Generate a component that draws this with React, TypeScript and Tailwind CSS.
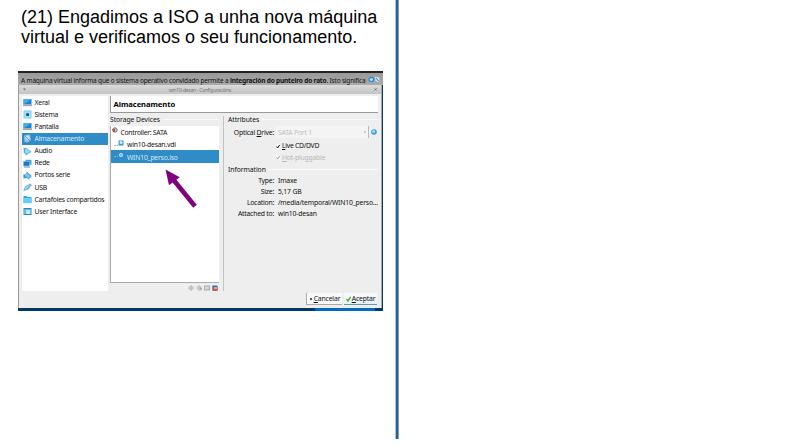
import React from 'react';

type IconName = 'screen' | 'chip' | 'disk' | 'audio' | 'net' | 'serial' | 'usb' | 'folder' | 'ui';

function SideIcon({ name }: { name: IconName }) {
  return (
    <svg className="h-[9px] w-[9px] shrink-0" viewBox="0 0 9 9">
      {name === 'screen' && (
        <>
          <rect x="0.5" y="1" width="8" height="5.5" fill="#1583d8" />
          <path d="M0.5 6.5V1h8z" fill="#48a9ec" />
          <rect x="0" y="6.3" width="9" height="1.9" fill="#9eabb3" />
        </>
      )}
      {name === 'chip' && (
        <>
          <rect x="0.5" y="0.5" width="8" height="8" fill="#79cdf2" />
          <rect x="1.5" y="1.5" width="6" height="6" fill="#a5e2fa" />
          <rect x="3.2" y="3.2" width="2.8" height="2.8" fill="#14507f" />
        </>
      )}
      {name === 'disk' && (
        <>
          <path d="M1 1.5 7 0.5 8 6 5 8.5 1.5 8z" fill="#8dc3e8" />
          <circle cx="4.5" cy="3.8" r="2.2" fill="#c9e3f4" />
          <path d="M2 2 7 7" stroke="#5692c0" strokeWidth="0.8" />
        </>
      )}
      {name === 'audio' && (
        <>
          <path d="M0.6 0.6 4 1.5 8.6 4.7 4.4 7.6 2.8 8.6 2.6 6.8 0.8 6z" fill="#4fa9e0" />
          <path d="M2 2 4 2.2 7.6 4.7 4.2 6.8 2 5.4z" fill="#9bd8f8" />
        </>
      )}
      {name === 'net' && (
        <>
          <rect x="2.5" y="0.8" width="6" height="5" fill="#4aa6dd" />
          <rect x="0.5" y="2.4" width="5.8" height="4.6" fill="#147ad0" stroke="#8ac3e4" strokeWidth="0.6" />
          <rect x="1" y="7.4" width="6" height="1.2" fill="#8f9da5" />
        </>
      )}
      {name === 'serial' && (
        <>
          <path d="M0.3 3.6 3.2 3.2 3.6 0.6 8.8 5 5.6 8.6 4 7 0.5 7.6z" fill="#3f9cda" />
          <path d="M2 4.6 4.2 2.6 7.4 5.1 5.3 7.2z" fill="#7ccaf5" />
        </>
      )}
      {name === 'usb' && (
        <>
          <path d="M0.5 7 2 3.4 5.5 1.2 7.8 3.5 5.6 6.6 2 7.4 0.6 8.6z" fill="#6fbbe6" />
          <path d="M5.5 1.2 6.8 0.3 9 2.3 7.8 3.5z" fill="#9ca9b0" />
          <path d="M2.4 6 5.5 2.7" stroke="#d1f1ff" strokeWidth="1" />
        </>
      )}
      {name === 'folder' && (
        <>
          <path d="M0.5 1h3l1 1h4v6h-8z" fill="#2fa9e5" />
          <rect x="0.5" y="3" width="8" height="5.2" fill="#65cef8" />
        </>
      )}
      {name === 'ui' && (
        <>
          <rect x="0.5" y="1" width="8" height="7" fill="#1c89d1" />
          <rect x="1.5" y="2.5" width="6" height="4.5" fill="#c4ebff" />
          <rect x="1.5" y="2.5" width="1.6" height="4.5" fill="#63baf0" />
        </>
      )}
    </svg>
  );
}

const sections: { label: string; icon: IconName }[] = [
  { label: 'Xeral', icon: 'screen' },
  { label: 'Sistema', icon: 'chip' },
  { label: 'Pantalla', icon: 'screen' },
  { label: 'Almacenamento', icon: 'disk' },
  { label: 'Audio', icon: 'audio' },
  { label: 'Rede', icon: 'net' },
  { label: 'Portos serie', icon: 'serial' },
  { label: 'USB', icon: 'usb' },
  { label: 'Cartafoles compartidos', icon: 'folder' },
  { label: 'User Interface', icon: 'ui' },
];

const info = [
  ['Type:', 'Imaxe'],
  ['Size:', '5,17 GB'],
  ['Location:', '/media/temporal/WIN10_perso...'],
  ['Attached to:', 'win10-desan'],
];

function GroupTitle({ children }: { children: React.ReactNode }) {
  return (
    <div className="flex h-[11px] items-center gap-[3px]">
      <span className="shrink-0 tracking-[-0.06px]">{children}</span>
      <span className="h-px grow bg-[#fafafa]" />
    </div>
  );
}

function Check({ muted }: { muted?: boolean }) {
  return (
    <svg className="h-[5px] w-[4px] shrink-0" viewBox="0 0 4 5">
      <rect x="0" y="0.25" width="4" height="4.5" fill="#f7f7f7" />
      <path d="M0.6 2.5 1.6 4 3.6 1" fill="none" stroke={muted ? '#999' : '#111'} strokeWidth="1" />
    </svg>
  );
}

function Sidebar() {
  return (
    <div className="h-[195px] w-[86px] shrink-0 bg-white pt-[0.5px]">
      {sections.map((s) => (
        <div
          key={s.label}
          className={
            'flex h-[12.15px] items-center gap-[3px] whitespace-nowrap pl-[0.5px] tracking-[-0.21px] ' +
            (s.label === 'Almacenamento' ? 'bg-[#308cc6] text-[#d5ebf8]' : '')
          }
        >
          <SideIcon name={s.icon} />
          <span>{s.label}</span>
        </div>
      ))}
    </div>
  );
}

function Storage() {
  return (
    <div className="w-[109px] shrink-0">
      <GroupTitle>Storage Devices</GroupTitle>
      <div className="mt-px h-[157px] border-b border-l border-[#aaa] bg-white tracking-[-0.2px]">
        <div className="flex h-[12px] items-center gap-[2.5px] pl-[1px]">
          <svg className="mb-[4px] h-[6px] w-[6px]" viewBox="0 0 6 6">
            <circle cx="3" cy="3" r="2.2" fill="#b9d2e4" stroke="#65788a" />
            <path d="M0 2h3v3H1z" fill="#d44a3c" />
          </svg>
          <span className="pt-[2px] tracking-[-0.27px]">Controller: SATA</span>
        </div>
        <div className="flex h-[12px] items-center pl-[3px]">
          <span className="mt-[2px] w-[4px] border-t border-dotted border-[#aaa]" />
          <svg className="mb-[3px] h-[6px] w-[6px]" viewBox="0 0 6 6">
            <rect x="0.5" y="0.5" width="5" height="5" fill="#369bd5" />
            <circle cx="3" cy="2.6" r="1.5" fill="#d5effc" />
          </svg>
          <span className="ml-[3px] pt-[2px]">win10-desan.vdi</span>
        </div>
        <div className="flex h-[13px] items-center bg-[#308cc6] pl-[3px] text-[#d3eafa]">
          <span className="w-[4px] border-t border-dotted border-[#79b8df]" />
          <svg className="mb-[4px] h-[6px] w-[6px]" viewBox="0 0 6 6">
            <circle cx="3" cy="3" r="2" fill="#b9e5fd" />
            <circle cx="3" cy="3" r="0.8" fill="#278bd0" />
          </svg>
          <span className="ml-[3px] pt-[2px]">WIN10_perso.iso</span>
        </div>
        <svg className="ml-[53.5px] mt-[6px] h-[40px] w-[34px]" viewBox="0 0 34 40">
          <path d="M0.5 0.5 14.8 8.2 11.4 10.8 31.8 35.7 28.2 38.7 7.6 13.6 4 16.2z" fill="#800080" />
        </svg>
      </div>
      <div className="mt-[1px] flex h-[8px] items-center justify-end gap-[2px] pr-px">
        <svg className="h-[6px] w-[6px]" viewBox="0 0 6 6"><path d="M3 .5 5.5 3 3 5.5.5 3z" fill="#ddd" stroke="#aaa" strokeWidth=".8" /><path d="M3 1.5v3" stroke="#aaa" /></svg>
        <svg className="h-[6px] w-[6px]" viewBox="0 0 6 6"><path d="M3 .5 5.5 3 3 5.5.5 3z" fill="#ddd" stroke="#aaa" strokeWidth=".8" /><path d="M3 3h2v2.5" fill="none" stroke="#999" /></svg>
        <svg className="h-[6px] w-[6px]" viewBox="0 0 6 6"><rect x=".5" y="1" width="5" height="4" fill="#d8d8d8" stroke="#aaa" /></svg>
        <svg className="h-[6px] w-[6px]" viewBox="0 0 6 6"><rect x=".3" y=".5" width="5.2" height="5.2" fill="#2a74b8" /><path d="M1.5 2h4v3.8H1z" fill="#e35533" /><path d="M2 3h3" stroke="#fff" strokeWidth=".8" /></svg>
      </div>
    </div>
  );
}

function Attributes() {
  return (
    <div className="w-[150px] shrink-0">
      <GroupTitle>Attributes</GroupTitle>
      <div className="mt-[1px] flex h-[12px] items-center">
        <span className="w-[46px] shrink-0 whitespace-nowrap pt-px text-right tracking-[-0.2px]">Optical <u>D</u>rive:</span>
        <div className="ml-[2px] flex h-[12px] w-[93px] shrink-0 items-center justify-between border-r border-[#bbb] bg-[#f4f4f4] pl-[2px] pr-[2px] text-[#c1c1c1]">
          <span className="pt-px tracking-[-0.2px]">SATA Port 1</span>
          <span className="h-[2px] w-[2px] bg-[#ccc]" />
        </div>
        <svg className="ml-[2px] h-[6px] w-[6px] shrink-0" viewBox="0 0 6 6">
          <circle cx="3" cy="3" r="2.8" fill="#3b9fdc" />
          <circle cx="2.7" cy="2.4" r="1.5" fill="#9bddff" />
        </svg>
      </div>
      <div className="mt-[2px] flex h-[12px] items-center gap-[2px] pl-[48px] tracking-[-0.27px]">
        <Check />
        <span><u>L</u>ive CD/DVD</span>
      </div>
      <div className="flex h-[11px] items-center gap-[2px] pl-[48px] tracking-[-0.2px] text-[#b8b8b8]">
        <Check muted />
        <span><u>H</u>ot-pluggable</span>
      </div>
      <div className="pt-px">
        <GroupTitle>Information</GroupTitle>
      </div>
      {info.map(([k, v]) => (
        <div key={k} className="flex h-[11.1px] items-center gap-[4px] whitespace-nowrap">
          <span className="w-[46px] shrink-0 text-right tracking-[-0.22px]">{k}</span>
          <span className="tracking-[-0.17px]">{v}</span>
        </div>
      ))}
    </div>
  );
}

function Screenshot() {
  return (
    <div className="ml-[18px] mt-[24px] flex h-[240px] w-[365px] flex-col overflow-hidden bg-[#003a68] font-['Noto_Sans','Open_Sans',sans-serif] text-[6.8px] leading-[10px] text-[#111]">
      <div className="flex h-[14px] shrink-0 items-center justify-between whitespace-nowrap border-t-2 border-[#222] bg-linear-to-b from-[#999] to-[#aaa] pl-[3px] pr-[3px] pt-[3px]">
        <span className="text-[6.5px] tracking-[-0.175px]">
          A máquina virtual informa que o sistema operativo convidado permite a <b>integración do punteiro do rato</b>. Isto significa
        </span>
        <svg className="mb-[3px] h-[7px] w-[12px] shrink-0" viewBox="0 0 12 7">
          <circle cx="3.4" cy="3.5" r="2.8" fill="#2489cf" />
          <path d="M1.5 3.5 3 2l2 .5-.4 2L3 5.2z" fill="#b1e4ff" />
          <path d="M7 .7 11.5 1.5 11 6 7.5 5z" fill="#c9e3f2" />
          <path d="M8 2 10.5 5" stroke="#287fbd" />
        </svg>
      </div>
      <div className="flex h-[223px] shrink-0">
        <div className="flex w-[364px] shrink-0 flex-col border-l border-r border-l-[#999] border-r-[#aaa] bg-[#eee]">
          <div className="flex h-[9px] shrink-0 items-center justify-between bg-linear-to-b from-[#dadada] to-[#c5c5c5] px-[4px] text-[5px] leading-[8px] text-[#777]">
            <svg className="h-[3px] w-[3px]" viewBox="0 0 3 3"><path d="M0 .5h3L1.5 2.5z" fill="#777" /></svg>
            <span className="tracking-[-0.25px]">win10-desan - Configuracións</span>
            <svg className="h-[3px] w-[3px]" viewBox="0 0 3 3"><path d="M.4.4 2.6 2.6M2.6.4.4 2.6" stroke="#666" strokeWidth=".8" /></svg>
          </div>
          <div className="flex h-[197px] gap-[2px] pl-[3px] pt-[2px]">
            <Sidebar />
            <div className="w-[268px] shrink-0">
              <div className="mb-px flex h-[17px] items-center border-b border-l border-[#999] bg-white pl-[2.5px] text-[7.6px] font-bold tracking-[-0.05px] text-black">
                Almacenamento
              </div>
              <div className="flex">
                <Storage />
                <div className="ml-[4px] mr-[4px] mt-[2px] h-[175px] w-px bg-[#c2c2c2]" />
                <Attributes />
              </div>
            </div>
          </div>
          <div className="mt-[2px] flex h-[12px] items-center justify-end gap-[2px] pr-[4px] tracking-[-0.15px]">
            <div className="flex h-[12px] w-[36px] items-center justify-center gap-[1px] border-b border-l border-[#aaa] bg-[#f9f9f9]">
              <svg className="h-[4px] w-[4px]" viewBox="0 0 4 4"><path d="m1 1 2 2M3 1 1 3" stroke="#555" /></svg>
              <span><u>C</u>ancelar</span>
            </div>
            <div className="flex h-[12px] w-[33px] items-center justify-center gap-px border-b border-[#6797a8] bg-linear-to-b from-[#fafafa] to-[#e2f0f5]">
              <svg className="h-[6px] w-[5px]" viewBox="0 0 5 6"><path d="M.5 3 2 5 4.6.8" fill="none" stroke="#58ad28" strokeWidth="1.4" /></svg>
              <span><u>A</u>ceptar</span>
            </div>
          </div>
        </div>
      </div>
      <div className="flex h-[3px] shrink-0">
        <span className="ml-[297px] w-[60px] bg-[#006bbf]" />
      </div>
    </div>
  );
}

export default function App() {
  return (
    <main className="flex h-[446px] w-[794px] overflow-hidden bg-white">
      <section className="w-[395px] shrink-0">
        <h1 className="h-[47px] whitespace-nowrap pl-[21px] pt-[7px] font-['Liberation_Sans',Arial,sans-serif] text-[18px] leading-[20px] text-black">
          (21) Engadimos a ISO a unha nova máquina
          <br />
          virtual e verificamos o seu funcionamento.
        </h1>
        <Screenshot />
      </section>
      <div className="h-[439px] w-[4px] shrink-0 border-x border-l-[#a9c2da] border-r-[#7d9fc2] bg-[#2a6099]" />
    </main>
  );
}
